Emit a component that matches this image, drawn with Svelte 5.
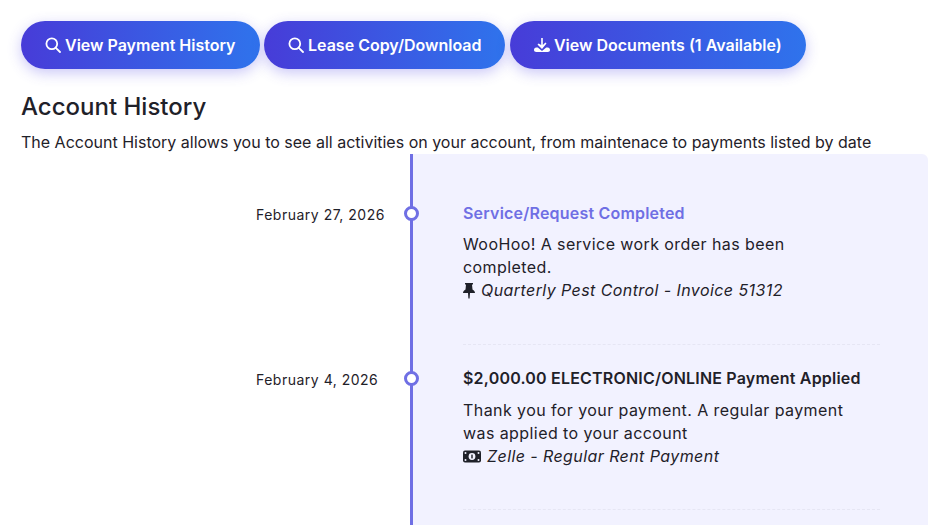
<script>
    const events = [
        {
            date: "February 27, 2026",
            title: "Service/Request Completed",
            accent: true,
            text: "WooHoo! A service work order has been completed.",
            note: "Quarterly Pest Control - Invoice 51312",
            icon: "pin"
        },
        {
            date: "February 4, 2026",
            title: "$2,000.00 ELECTRONIC/ONLINE Payment Applied",
            accent: false,
            text: "Thank you for your payment. A regular payment was applied to your account",
            note: "Zelle - Regular Rent Payment",
            icon: "money"
        }
    ];
</script>

<div class="page">
    <div class="actions">
        <button class="btn">
            <svg width="16" height="16" viewBox="0 0 16 16" fill="none" stroke="currentColor" stroke-width="1.8" stroke-linecap="round"><circle cx="6.800" cy="6.800" r="5.400" /><path d="M10.800 10.800 15 15" /></svg>
            View Payment History
        </button>
        <button class="btn">
            <svg width="16" height="16" viewBox="0 0 16 16" fill="none" stroke="currentColor" stroke-width="1.8" stroke-linecap="round"><circle cx="6.800" cy="6.800" r="5.400" /><path d="M10.800 10.800 15 15" /></svg>
            Lease Copy/Download
        </button>
        <button class="btn">
            <svg width="16" height="16" viewBox="0 0 16 16" fill="currentColor"><path d="M7.200 1h1.600v7l2.600-2.600 1.100 1.100L8 12 3.500 7.500l1.100-1.100L7.200 8z" /><path d="M0 13c0-1.400.9-2.500 2.300-2.500h1.500L8 14l4.200-3.500h1.500c1.400 0 2.300 1.100 2.300 2.500 0 1.300-.9 2-2.300 2H2.300C.9 15 0 14.300 0 13z" /></svg>
            View Documents (1 Available)
        </button>
    </div>

    <h2>Account History</h2>
    <p class="intro">The Account History allows you to see all activities on your account, from maintenace to payments listed by date</p>

    <div class="timeline">
        {#each events as event}
            <div class="event">
                <div class="date">{event.date}</div>
                <div class="body">
                    <h3 class:accent={event.accent}><span class="dot"></span>{event.title}</h3>
                    <p>{event.text}</p>
                    <p class="note">
                        {#if event.icon === "pin"}
                            <svg width="12" height="16" viewBox="0 0 12 16" fill="currentColor"><path d="M2 0h8v1.500H9l.5 5c1.500.8 2.500 2 2.500 3.500H7l-.4 5.500h-1.200L5 10H0c0-1.500 1-2.700 2.500-3.500l.5-5H2z" /></svg>
                        {:else}
                            <svg width="18" height="13" viewBox="0 0 18 13"><rect width="18" height="12" y=".5" rx="2" fill="currentColor" /><circle cx="9" cy="6.500" r="3.400" fill="#f2f2ff" /><rect x="8.300" y="4.600" width="1.400" height="3.800" fill="currentColor" /><g fill="#f2f2ff"><circle cx="2.500" cy="3" r="1" /><circle cx="15.500" cy="3" r="1" /><circle cx="2.500" cy="10" r="1" /><circle cx="15.500" cy="10" r="1" /></g></svg>
                        {/if}
                        <em>{event.note}</em>
                    </p>
                </div>
            </div>
        {/each}
        <div class="event">
            <div class="date"></div>
            <div class="body empty"></div>
        </div>
    </div>
</div>

<style>
    :global(body) {
        margin: 0;
        background: #fff;
        overflow: hidden;
    }

    .page {
        height: 525px;
        overflow: hidden;
        box-sizing: border-box;
        padding: 21px 8px 0 21px;
        font-family: Inter, "Liberation Sans", sans-serif;
        color: #1f2129;
    }

    .actions {
        display: flex;
        gap: 4.5px;
    }

    .btn {
        display: flex;
        align-items: center;
        justify-content: center;
        gap: 4px;
        height: 48px;
        padding: 0 24px;
        border: 0;
        border-radius: 24px;
        background: linear-gradient(90deg, #473cd8, #2f73ec);
        box-shadow: 0 4px 14px rgba(79, 70, 229, 0.3);
        color: #fff;
        font: 600 16px Inter, "Liberation Sans", sans-serif;
    }

    h2 {
        margin: 22px 0 0;
        font-size: 24px;
        line-height: 32px;
        font-weight: 500;
    }

    .intro {
        margin: 7px 0 0;
        font-size: 16px;
        line-height: 24px;
    }

    .event {
        display: grid;
        grid-template-columns: 389px 1fr;
    }

    .date {
        padding: 25.5px 0 0 235px;
        font-size: 14px;
        line-height: 20px;
        letter-spacing: 0.5px;
    }

    .body {
        border-left: 3px solid #6f6fe4;
        background: #f2f2ff;
        padding: 23.5px 48px 42px 50px;
        position: relative;
        font-size: 16px;
        line-height: 23px;
        letter-spacing: 0.42px;
    }

    .event:first-child .date {
        padding-top: 50.5px;
    }

    .event:first-child .body {
        padding-top: 49px;
        padding-bottom: 42.5px;
        border-top-right-radius: 6px;
    }

    .event:first-child h3 {
        margin-bottom: 10px;
    }

    .body::after {
        content: "";
        position: absolute;
        left: 50px;
        right: 48px;
        bottom: 0;
        border-bottom: 1px dashed #e6e6f4;
    }

    .body.empty::after {
        display: none;
    }

    .dot {
        position: absolute;
        left: -59px;
        top: 2.5px;
        box-sizing: border-box;
        width: 15px;
        height: 15px;
        border: 3px solid #6f6fe4;
        border-radius: 50%;
        background: #fff;
    }

    h3 {
        position: relative;
        margin: 0 0 10.5px;
        font-size: 16px;
        line-height: 20px;
        font-weight: 600;
        letter-spacing: 0.2px;
    }

    h3.accent {
        color: #6f6fe4;
    }

    .body p {
        margin: 0;
        max-width: 400px;
    }

    .note {
        display: flex;
        align-items: center;
        gap: 6px;
    }
</style>
